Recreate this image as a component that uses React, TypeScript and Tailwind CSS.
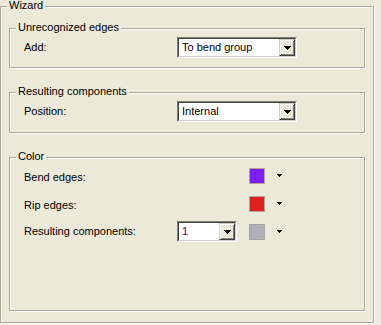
import React from "react";

const font = { fontFamily: '"Liberation Sans", Arial, sans-serif' };

function Group({ title, className, children }: { title: string; className?: string; children?: React.ReactNode }) {
  return (
    <div
      className={`relative border border-[#aca899] shadow-[inset_1px_1px_0_#fff,1px_1px_0_#fff] ${className ?? ""}`}
    >
      <span className="absolute -top-[8px] left-[6px] bg-[#ece9d8] px-[2px] leading-[13px] text-black">
        {title}
      </span>
      {children}
    </div>
  );
}

function Combo({ value, width, textClass }: { value: string; width: string; textClass?: string }) {
  return (
    <div className={`flex h-[21px] ${width} border border-t-[#808080] border-l-[#808080] border-b-white border-r-white`}>
      <div className="flex flex-1 border border-t-[#404040] border-l-[#404040] border-b-[#d4d0c8] border-r-[#d4d0c8] bg-white">
        <span className={`flex-1 pl-[3px] leading-[17px] ${textClass ?? "text-black"}`}>{value}</span>
        <div className="flex w-[16px] items-center justify-center border border-t-[#d4d0c8] border-l-[#d4d0c8] border-b-[#404040] border-r-[#404040] bg-[#ece9d8] shadow-[inset_1px_1px_0_#fff,inset_-1px_-1px_0_#808080]">
          <svg width="7" height="4" viewBox="0 0 7 4">
            <path d="M0 0h7v1h-1v1h-1v1h-1v1h-1v-1h-1v-1h-1v-1h-1z" fill="#000" />
          </svg>
        </div>
      </div>
    </div>
  );
}

function Swatch({ color }: { color: string }) {
  return (
    <div className="flex items-center gap-[12px]">
      <div className={`h-[16px] w-[16px] border border-[#a8a59a] ${color}`} />
      <svg width="5" height="3" viewBox="0 0 5 3">
        <path d="M0 0h5v1h-1v1h-1v1h-1v-1h-1v-1h-1z" fill="#000" />
      </svg>
    </div>
  );
}

export default function App() {
  return (
    <div className="flex h-[325px] w-[381px] bg-[#ece9d8] pt-[6px] text-[11px]" style={font}>
      <Group title="Wizard" className="h-[317px] w-[374px] shrink-0 pt-[21px] pl-[8px]">
        <div className="flex flex-col gap-[24px]">
          <Group title="Unrecognized edges" className="h-[40px] w-[356px]">
            <div className="flex items-center pt-[8px] pl-[14px]">
              <span className="w-[153px]">Add:</span>
              <Combo value="To bend group" width="w-[120px]" />
            </div>
          </Group>

          <Group title="Resulting components" className="h-[41px] w-[356px]">
            <div className="flex items-center pt-[8px] pl-[14px]">
              <span className="w-[153px]">Position:</span>
              <Combo value="Internal" width="w-[120px]" />
            </div>
          </Group>

          <Group title="Color" className="h-[154px] w-[356px]">
            <div className="flex flex-col gap-[7px] pt-[7px] pl-[14px]">
              <div className="flex h-[21px] items-center">
                <span className="mt-[3px] w-[225px]">Bend edges:</span>
                <Swatch color="bg-[#7f1fff]" />
              </div>
              <div className="flex h-[21px] items-center">
                <span className="mt-[3px] w-[225px]">Rip edges:</span>
                <Swatch color="bg-[#e02020]" />
              </div>
              <div className="flex h-[21px] items-center">
                <span className="w-[153px]">Resulting components:</span>
                <Combo value="1" width="w-[60px]" textClass="text-[#4a0a70]" />
                <div className="ml-[12px]">
                  <Swatch color="bg-[#b0b0bc]" />
                </div>
              </div>
            </div>
          </Group>
        </div>
      </Group>
      <div className="-mt-[6px] ml-[1px] flex-1 bg-[#efecdf]" />
    </div>
  );
}
